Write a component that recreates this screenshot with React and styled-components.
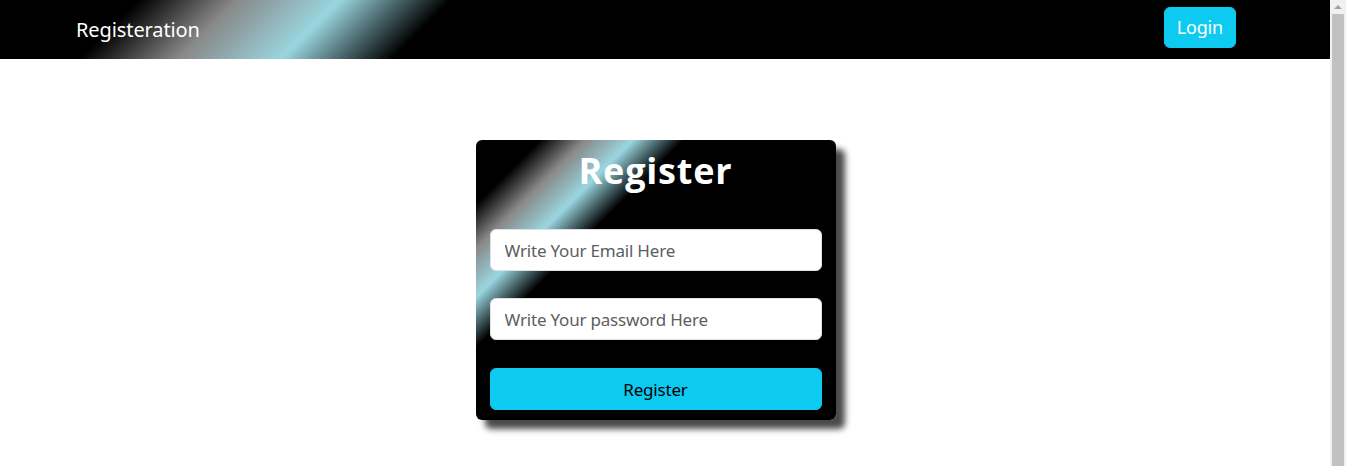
import React from 'react'
import styled, { createGlobalStyle } from 'styled-components'

const shine = `linear-gradient(135deg, #000 10%, #888 17%, #9ad6e0 24.5%, #000 32.5%)`
const info = "#0dcaf0"

const Global = createGlobalStyle`
	body {
		margin: 0;
		font-family: "Noto Sans", "Open Sans", sans-serif;
		background: #fff;
		overflow: hidden;
	}
`

const Window = styled.div`
	display: flex;
	height: 466px;
`

const Page = styled.div`
	flex: 1;
	min-width: 0;
`

const ScrollBar = styled.div`
	width: 16px;
	background: #f1f1f1;
	display: flex;
	flex-direction: column;
	align-items: center;
`

const ScrollArrow = styled.div`
	height: 14px;
	width: 16px;
	display: flex;
	align-items: center;
	justify-content: center;
	&::before {
		content: "";
		border-left: 4px solid transparent;
		border-right: 4px solid transparent;
		border-bottom: 4px solid #a3a3a3;
	}
`

const ScrollThumb = styled.div`
	flex: 1;
	width: 12px;
	background: #c1c1c1;
`

const Navbar = styled.nav`
	height: 59px;
	display: flex;
	align-items: flex-start;
	justify-content: space-between;
	padding: 0 94px 0 76px;
	background: ${shine};
	box-sizing: border-box;
`

const Brand = styled.span`
	color: #fff;
	font-size: 20px;
	line-height: 59px;
	letter-spacing: -0.1px;
`

const Button = styled.button`
	font-family: inherit;
	border: 1px solid ${info};
	background: ${info};
	border-radius: 6px;
	cursor: pointer;
	color: ${p => p.$light ? "#fff" : "#000"};
	font-size: ${p => p.$light ? "18px" : "17px"};
	line-height: 27px;
	padding: 6px 12px;
	margin-top: ${p => p.$light ? "7px" : "0"};
	width: ${p => p.$block ? "100%" : "auto"};
	height: ${p => p.$light ? "41px" : "42px"};
	letter-spacing: -0.2px;
`

const Main = styled.main`
	display: flex;
	justify-content: center;
	padding: 81px 19px 0 0;
`

const Card = styled.form`
	width: 360px;
	height: 280px;
	box-sizing: border-box;
	padding: 0 14px 10px;
	border-radius: 6px;
	background: ${shine};
	box-shadow: 9px 9px 6px #4a4a4a;
	display: flex;
	flex-direction: column;
`

const Title = styled.h1`
	margin: 0;
	height: 89px;
	padding-top: 6px;
	box-sizing: border-box;
	text-align: center;
	color: #fff;
	font-family: "Open Sans", sans-serif;
	font-weight: 700;
	font-size: 36px;
	letter-spacing: 0.8px;
	line-height: 50px;
`

const Input = styled.input`
	height: 42px;
	box-sizing: border-box;
	width: 100%;
	flex-shrink: 0;
	border: 1px solid #dee2e6;
	border-radius: 6px;
	padding: 0 14px;
	font-family: inherit;
	font-size: 17px;
	letter-spacing: -0.2px;
	margin-bottom: ${p => p.$gap}px;
	&::placeholder {
		color: #5b5e62;
	}
`

export default function App() {
	return (
		<Window>
			<Global />
			<Page>
				<Navbar>
					<Brand>Registeration</Brand>
					<Button type="button" $light>Login</Button>
				</Navbar>
				<Main>
					<Card onSubmit={e => e.preventDefault()}>
						<Title>Register</Title>
						<Input type="email" placeholder="Write Your Email Here" $gap={27} />
						<Input type="password" placeholder="Write Your password Here" $gap={28} />
						<Button type="submit" $block>Register</Button>
					</Card>
				</Main>
			</Page>
			<ScrollBar>
				<ScrollArrow />
				<ScrollThumb />
			</ScrollBar>
		</Window>
	)
}
